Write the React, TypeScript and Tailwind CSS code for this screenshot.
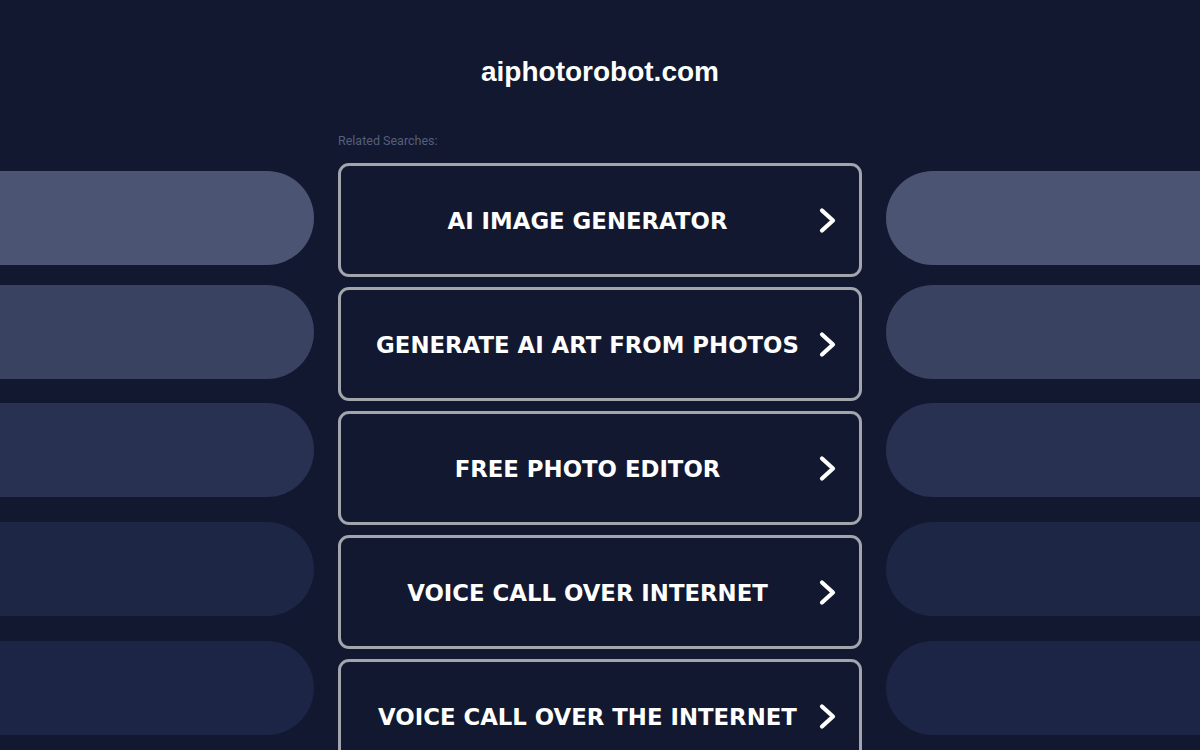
const searches = [
  'AI IMAGE GENERATOR',
  'GENERATE AI ART FROM PHOTOS',
  'FREE PHOTO EDITOR',
  'VOICE CALL OVER INTERNET',
  'VOICE CALL OVER THE INTERNET',
];

// side decoration bars, top to bottom
const bars = [
  { color: 'bg-[#4b5573]', gap: 'mt-0' },
  { color: 'bg-[#3a4262]', gap: 'mt-[20px]' },
  { color: 'bg-[#283151]', gap: 'mt-[24px]' },
  { color: 'bg-[#1e2646]', gap: 'mt-[25px]' },
  { color: 'bg-[#1c2545]', gap: 'mt-[25px]' },
];

function Chevron() {
  return (
    <svg width="19" height="27" viewBox="0 0 19 27" className="shrink-0 ml-1 mr-[22px]">
      <polyline
        points="4,3.5 15,13.5 4,23.5"
        fill="none"
        stroke="#ffffff"
        strokeWidth="4.2"
        strokeLinecap="round"
        strokeLinejoin="round"
      />
    </svg>
  );
}

function SideBars({ side }: { side: 'left' | 'right' }) {
  return (
    <div className="w-[314px] shrink-0 pt-[41px] flex flex-col">
      {bars.map((b, i) => (
        <div
          key={i}
          className={`h-[94px] ${b.color} ${b.gap} ${side === 'left' ? 'rounded-r-full' : 'rounded-l-full'}`}
        />
      ))}
    </div>
  );
}

export default function App() {
  return (
    <div className="h-[750px] w-[1200px] overflow-hidden bg-[#111830]">
      <div className="pt-[55px] h-[130px]">
        <h1 className="text-center text-white text-[28px] leading-[34px] font-bold font-['Liberation_Sans',Arial,sans-serif]">
          aiphotorobot.com
        </h1>
      </div>

      <div className="flex gap-[24px]">
        <SideBars side="left" />

        <div className="w-[524px] shrink-0">
          <p className="h-[22px] leading-[22px] text-[12.5px] text-[#555f7c] font-['Roboto',Arial,sans-serif] mb-[11px]">
            Related Searches:
          </p>
          <div className="flex flex-col gap-[10px]">
            {searches.map((s) => (
              <a
                key={s}
                href="#"
                className="h-[114px] flex items-center pl-[20px] rounded-[11px] border-[3px] border-[#a3a5ad] bg-[#111830]"
              >
                <span className="flex-1 pt-[2px] text-center text-white text-[22.8px] font-bold font-['DejaVu_Sans',Verdana,sans-serif]">
                  {s}
                </span>
                <Chevron />
              </a>
            ))}
          </div>
        </div>

        <SideBars side="right" />
      </div>
    </div>
  );
}
